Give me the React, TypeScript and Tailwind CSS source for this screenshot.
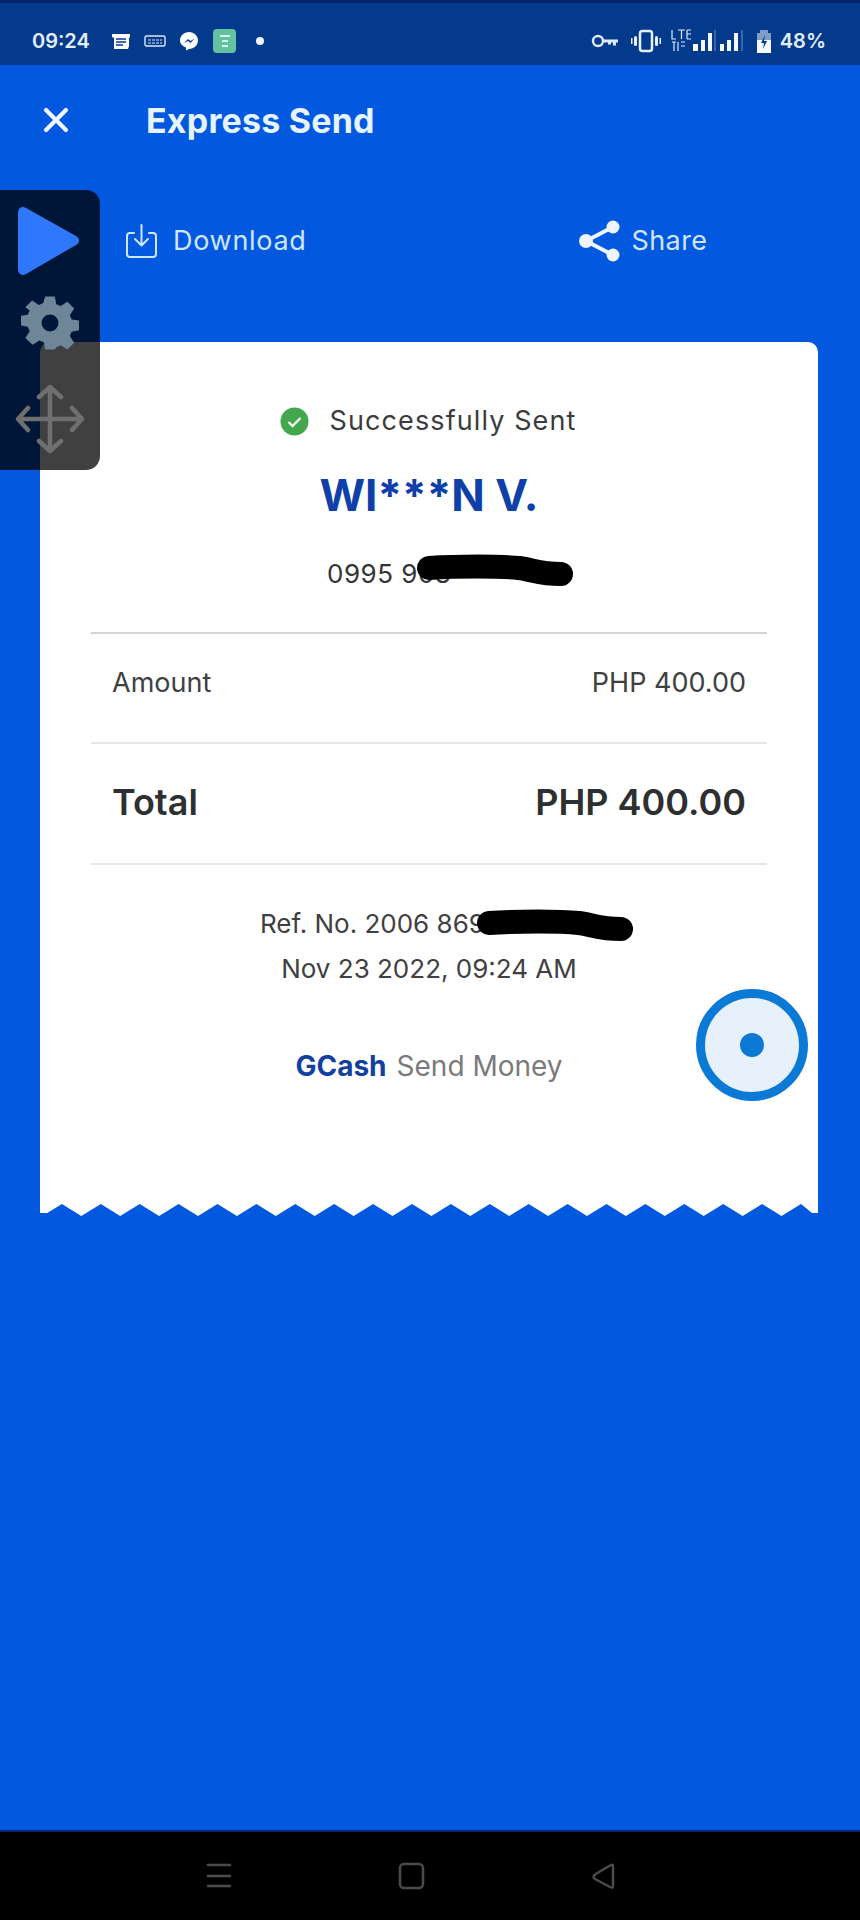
import { X } from "lucide-react"

const teeth = Array.from({ length: 20 }, (_, i) => i)

function StatusBar() {
  return (
    <div className="flex h-[65px] items-center justify-between border-t-[3px] border-[#0a2570] bg-[#033a8c] pl-[32px] pr-[34px] pt-[14px] text-[#e3eefb]">
      <div className="flex items-center">
        <span className="w-[59px] text-[20px] font-semibold">09:24</span>
        <div className="ml-[20px] flex items-center">
          <svg width="20" height="18" viewBox="0 0 20 18" className="text-white">
            <path d="M1 2h18v3l-1 1v8l-1 3H3V6L1 5z" fill="currentColor" />
            <path d="M5 7h10M5 10h10M5 13h7" stroke="#033a8c" strokeWidth="1.5" />
          </svg>
          <svg width="22" height="14" viewBox="0 0 22 14" className="ml-[13px]">
            <rect x="1" y="2" width="20" height="10" rx="1.5" fill="none" stroke="#dbe7f7" strokeWidth="1.4" />
            <path d="M4 6h14M4 9h14" stroke="#dbe7f7" strokeWidth="1" strokeDasharray="3 1" />
          </svg>
          <svg width="20" height="20" viewBox="0 0 20 20" className="ml-[13px]">
            <path d="M10 1c5 0 9 3.700 9 8.500S15 18 10 18l-3 1.500V16.500C3 15 1 12.500 1 9.500 1 4.700 5 1 10 1z" fill="#fff" />
            <path d="M5 12l4-4 2.500 2 4-2.500-4 4.500-2.500-2z" fill="#033a8c" />
          </svg>
          <div className="ml-[14px] flex h-[24px] w-[23px] flex-col items-center justify-center gap-[3px] rounded-[4px] bg-[#64c2a1]">
            <span className="h-[2px] w-[10px] bg-[#d8f3e8]" />
            <span className="h-[2px] w-[6px] bg-[#d8f3e8]" />
            <span className="h-[2px] w-[6px] bg-[#d8f3e8]" />
          </div>
          <span className="ml-[20px] h-[8px] w-[8px] rounded-full bg-[#f0f6fd]" />
        </div>
      </div>
      <div className="flex items-center">
        <svg width="28" height="14" viewBox="0 0 28 14">
          <circle cx="7" cy="7" r="5" fill="none" stroke="#dfeafa" strokeWidth="2.400" />
          <path d="M12 5.500h15v3h-2v3h-3v-3h-2v2h-3v-2h-5z" fill="#dfeafa" />
        </svg>
        <svg width="30" height="24" viewBox="0 0 30 24" className="ml-[12px]">
          <rect x="9" y="2" width="12" height="20" rx="2.500" fill="none" stroke="#e8f0fb" strokeWidth="2.500" />
          <rect x="3" y="7" width="3" height="10" rx="1.500" fill="#e8f0fb" />
          <rect x="24" y="7" width="3" height="10" rx="1.500" fill="#e8f0fb" />
          <rect x="0" y="9" width="1.500" height="6" fill="#e8f0fb" />
          <rect x="28.500" y="9" width="1.500" height="6" fill="#e8f0fb" />
        </svg>
        <svg width="72" height="24" viewBox="0 0 72 24" className="ml-[10px]">
          <path d="M1 1v9h4M7 1h7M10.500 1v9M16 1v9M16 1h4M16 5h4M16 10h4M1 13h4M3 13v9M7 13v9M10 13h4M10 17h4" stroke="#dfeafa" strokeWidth="1.200" fill="none" />
          <path d="M22 15h5v7h-5zM30 11h4v11h-4zM37 4h4v18h-4z" fill="#f5f9fe" />
          <path d="M44 1v21" stroke="#6e8fc4" strokeWidth="1" />
          <path d="M49 15h4v7h-4zM56 11h4v11h-4zM63 4h4v18h-4z" fill="#f5f9fe" />
          <path d="M71 1v21" stroke="#6e8fc4" strokeWidth="1" />
        </svg>
        <svg width="16" height="24" viewBox="0 0 16 24" className="ml-[13px]">
          <path d="M4 1h8v3h3v20H1V4h3z" fill="#7f9cc8" />
          <path d="M1 11h14v13H1z" fill="#f5f9fe" />
          <path d="M9 6l-4 8h3l-1 6 4-8H8z" fill="#033a8c" />
        </svg>
        <span className="ml-[8px] text-[20px] font-semibold">48%</span>
      </div>
    </div>
  )
}

function FloatingPanel() {
  return (
    <div className="absolute left-0 top-[190px] flex h-[280px] w-[100px] flex-col items-center rounded-r-[14px] bg-black/75">
      <svg width="66" height="72" viewBox="0 0 66 72" className="ml-[-2px] mt-[15px]">
        <path d="M2 8c0-5 4-7.500 8-5l50 28c4 2.500 4 6.500 0 9L10 69c-4 2.500-8 0-8-5z" fill="#2f78fb" />
      </svg>
      <svg width="58" height="58" viewBox="0 0 24 24" className="mt-[17px]">
        <path
          fillRule="evenodd"
          d="M10 1h4l.6 3.200 1.800.8 2.800-1.800 2.800 2.800-1.800 2.800.8 1.800 3 .4v4l-3 .6-.8 1.800 1.800 2.800-2.800 2.800-2.800-1.800-1.800.8L14 23h-4l-.6-3-1.800-.8-2.800 1.800L1.800 18.200l1.800-2.800-.8-1.800-2.800-.6v-4l2.800-.4.8-1.800L1.800 5.500l2.800-2.800 2.800 1.800 1.800-.8zM12 8.500a3.500 3.500 0 1 0 0 7 3.500 3.500 0 0 0 0-7z"
          fill="#6f8699"
        />
      </svg>
      <svg width="70" height="70" viewBox="0 0 70 70" fill="none" stroke="#6f6f6f" strokeWidth="4.500" strokeLinecap="round" strokeLinejoin="round" className="mt-[32px]">
        <path d="M35 3v64M3 35h64M24 13l11-10 11 10M24 57l11 10 11-10M13 24L3 35l10 11M57 24l10 11-10 11" />
      </svg>
    </div>
  )
}

function Divider({ strong }: { strong?: boolean }) {
  return <div className={strong ? "mx-[51px] h-[2px] bg-[#d4d4d6]" : "mx-[51px] h-[2px] bg-[#e6e6e8]"} />
}

function Scribble({ className }: { className: string }) {
  return (
    <svg width="160" height="44" viewBox="0 0 160 44" className={className}>
      <path d="M14 20c30-2 70-2 90 0 14 2 22 6 42 6" fill="none" stroke="#000" strokeWidth="24" strokeLinecap="round" />
    </svg>
  )
}

function Receipt() {
  return (
    <div className="relative mx-[40px] w-[778px]">
      <div className="flex h-[862px] flex-col rounded-t-[10px] bg-white pt-[59px]">
        <div className="flex h-[40px] items-center justify-center gap-[21px] pr-[2px]">
          <svg width="29" height="29" viewBox="0 0 29 29">
            <circle cx="14.500" cy="14.500" r="14" fill="#43a84d" />
            <path d="M8.500 15l4 4 8-8" fill="none" stroke="#eaf7ea" strokeWidth="2.400" />
          </svg>
          <span className="text-[27px] tracking-[1.1px] text-[#3a3b3d]">Successfully Sent</span>
        </div>
        <div className="mt-[24px] flex h-[60px] items-center justify-center text-[44px] font-bold text-[#0f3fa8]">WI***N V.</div>
        <div className="relative mt-[34px] h-[30px] pl-[287px] text-[26px] leading-[30px] tracking-[0.5px] text-[#333436]">
          0995 908
          <Scribble className="absolute left-[375px] top-[-11px]" />
        </div>
        <div className="mt-[43px]">
          <Divider strong />
        </div>
        <div className="flex h-[108px] items-center justify-between px-[72px] pb-[10px] text-[27px] text-[#3f4042]">
          <span>Amount</span>
          <span>PHP 400.00</span>
        </div>
        <Divider />
        <div className="flex h-[119px] items-center justify-between px-[72px] pb-[4px] text-[36px] font-semibold text-[#2e2f31]">
          <span>Total</span>
          <span>PHP 400.00</span>
        </div>
        <Divider />
        <div className="relative mt-[42px] h-[34px] pl-[220px] text-[26px] leading-[34px] text-[#3f4042]">
          Ref. No. 2006 869
          <Scribble className="absolute left-[435px] top-[-4px]" />
        </div>
        <div className="mt-[11px] h-[34px] text-center text-[26px] leading-[34px] text-[#3f4042]">Nov 23 2022, 09:24 AM</div>
        <div className="mt-[59px] flex items-center justify-center gap-[10px] text-[28px]">
          <span className="font-bold text-[#12409f]">GCash</span>
          <span className="text-[#7a7a7c]">Send Money</span>
        </div>
      </div>
      <svg width="778" height="13" viewBox="0 0 778 13" className="block">
        <polygon
          fill="#fff"
          points={`0,0 778,0 778,9 772,9 ${teeth
            .map((i) => `${761 - i * 38.9},0 ${741.500 - i * 38.900},12`)
            .join(" ")} 7,9 0,9`}
        />
      </svg>
      <div className="absolute left-[656px] top-[647px] flex h-[112px] w-[112px] items-center justify-center rounded-full border-[9px] border-[#0b79d6] bg-[#e6f1fb]">
        <span className="h-[24px] w-[24px] rounded-full bg-[#0b79d6]" />
      </div>
    </div>
  )
}

export default function App() {
  return (
    <div className="relative h-[1920px] w-[860px] overflow-hidden bg-[#0258df] font-['Inter',sans-serif]">
      <StatusBar />
      <div className="flex h-[110px] items-center pl-[36px]">
        <X size={40} strokeWidth={2.500} className="text-[#eef7ff]" />
        <h1 className="ml-[70px] text-[34px] font-bold tracking-[0.2px] text-[#e6f4ff]">Express Send</h1>
      </div>
      <div className="flex h-[132px] items-center text-[#cfe6fd]">
        <div className="ml-[125px] flex items-center">
          <svg width="33" height="35" viewBox="0 0 33 35" fill="none" stroke="#cfe6fd" strokeWidth="2" strokeLinejoin="round" strokeLinecap="round">
            <path d="M9 9H5a3 3 0 0 0-3 3v18a3 3 0 0 0 3 3h23a3 3 0 0 0 3-3V12a3 3 0 0 0-3-3h-4" />
            <path d="M16.500 1v20M10 15l6.500 6.500L23 15" />
          </svg>
          <span className="ml-[15px] text-[27px] tracking-[0.7px]">Download</span>
        </div>
        <div className="ml-[272px] flex items-center">
          <svg width="42" height="42" viewBox="0 0 42 42" fill="none">
            <path d="M34 7L7 21l27 14" stroke="#eef5fe" strokeWidth="4" />
            <circle cx="34" cy="7" r="6.500" fill="#eef5fe" />
            <circle cx="7" cy="21" r="7" fill="#eef5fe" />
            <circle cx="34" cy="35" r="6.500" fill="#eef5fe" />
          </svg>
          <span className="ml-[11px] text-[27px] tracking-[0.4px]">Share</span>
        </div>
      </div>
      <div className="h-[35px]" />
      <Receipt />
      <FloatingPanel />
      <div className="absolute bottom-0 left-0 flex h-[90px] w-full items-center justify-center border-t-2 border-[#0a2570] bg-black">
        <svg width="560" height="40" viewBox="0 0 560 40" fill="none" stroke="#4b4b4b" strokeWidth="2.500" strokeLinecap="round" strokeLinejoin="round">
          <path d="M58 9h22M58 20h22M58 30h22" />
          <rect x="250" y="8" width="23" height="24" rx="4" />
          <path d="M463 10v20c0 2-1 2-3 1l-15-8c-2-1.500-2-3 0-4.500l15-9c2-1 3-1 3 .5z" />
        </svg>
      </div>
    </div>
  )
}
